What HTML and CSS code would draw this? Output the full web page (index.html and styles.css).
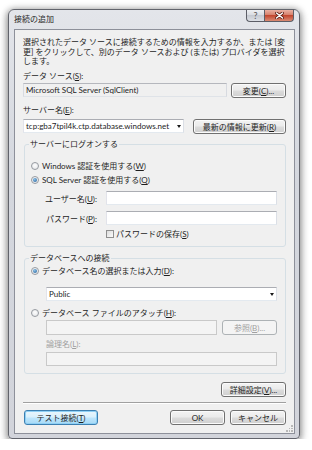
FILE: index.html
```html
<!DOCTYPE html>
<html lang="ja">
<head>
<meta charset="utf-8">
<title>接続の追加</title>
<link rel="stylesheet" href="styles.css">
</head>
<body>
<div class="win">
  <div class="titlebar">
    <span class="title">接続の追加</span>
    <div class="caps">
      <span class="cb help">?</span>
      <span class="cb close"><svg width="9" height="7" viewBox="0 0 9 7"><path d="M1.5 1 L7.5 6 M7.5 1 L1.5 6" stroke="#5a1a10" stroke-width="3" stroke-linecap="round"/><path d="M1.5 1 L7.5 6 M7.5 1 L1.5 6" stroke="#fff" stroke-width="1.6" stroke-linecap="round"/></svg></span>
    </div>
  </div>
  <div class="client">
    <div class="desc">
      <span class="ln">選択されたデータ ソースに接続するための情報を入力するか、または [変</span>
      <span class="ln">更] をクリックして、別のデータ ソースおよび (または) プロバイダを選択</span>
      <span class="ln">します。</span>
    </div>
    <div class="lbl l1">データ ソース(<u>S</u>):</div>
    <div class="row r1">
      <div class="box ro">Microsoft SQL Server (SqlClient)</div>
      <div class="btn w55">変更(<u>C</u>)...</div>
    </div>
    <div class="lbl l2">サーバー名(<u>E</u>):</div>
    <div class="row r2">
      <div class="box combo">tcp:gba7tpil4k.ctp.database.windows.net<span class="arrow"></span></div>
      <div class="btn w93">最新の情報に更新(<u>R</u>)</div>
    </div>
    <fieldset class="grp g1">
      <legend>サーバーにログオンする</legend>
      <div class="opt o1"><span class="radio"></span>Windows 認証を使用する(<u>W</u>)</div>
      <div class="opt o2"><span class="radio on"></span>SQL Server 認証を使用する(<u>Q</u>)</div>
      <div class="frm f1"><span class="flbl">ユーザー名(<u>U</u>):</span><div class="box"></div></div>
      <div class="frm f2"><span class="flbl">パスワード(<u>P</u>):</span><div class="box"></div></div>
      <div class="chk"><span class="cbox"></span>パスワードの保存(<u>S</u>)</div>
    </fieldset>
    <fieldset class="grp g2">
      <legend>データベースへの接続</legend>
      <div class="opt o3"><span class="radio on"></span>データベース名の選択または入力(<u>D</u>):</div>
      <div class="box combo db">Public<span class="arrow"></span></div>
      <div class="opt o4"><span class="radio"></span>データベース ファイルのアタッチ(<u>H</u>):</div>
      <div class="row file">
        <div class="box dis"></div>
        <div class="btn w55 disb">参照(<u>B</u>)...</div>
      </div>
      <div class="lbl dlbl">論理名(<u>L</u>):</div>
      <div class="box dis wide"></div>
    </fieldset>
    <div class="btn adv">詳細設定(<u>V</u>)...</div>
    <div class="sep"></div>
    <div class="bottom">
      <div class="btn test">テスト接続(<u>T</u>)</div>
      <div class="btn ok">OK</div>
      <div class="btn cancel">キャンセル</div>
    </div>
    <div class="grip"><i></i><i></i><i></i><i></i><i></i><i></i></div>
  </div>
</div>
</body>
</html>
```
FILE: styles.css
```css
* { box-sizing: border-box; }
html, body { margin: 0; padding: 0; background: #fff; }
body {
  font-family: Lato, "Noto Sans CJK JP", sans-serif;
  font-size: 8px;
  color: #1e1e1e;
}
u { text-decoration: underline; text-underline-offset: 1px; }

.win {
  margin: 9px 0 0 8px;
  width: 292px;
  height: 430px;
  border: 1px solid #62646c;
  border-radius: 6px 6px 4px 4px;
  background: linear-gradient(#e3e5ea, #d4d7de 40%, #d2d4db);
  padding: 0 4px 4px 5px;
  display: flex;
  flex-direction: column;
  box-shadow: 0 1px 7px 1px rgba(0,0,0,.38), 0 4px 10px rgba(0,0,0,.2);
}
.titlebar { height: 20px; display: flex; align-items: flex-start; }
.title { padding-top: 4px; line-height: 10px; color: #2a2a2a; }
.caps { margin-left: auto; margin-right: 1px; display: flex; }
.cb {
  height: 12px;
  border: 1px solid #5c5e67;
  border-top: none;
  display: flex;
  align-items: center;
  justify-content: center;
}
.help {
  width: 18px;
  border-right: none;
  border-radius: 0 0 0 4px;
  background: linear-gradient(#eef0f3, #d9dce2 45%, #c6cad2 50%, #dde0e6);
  color: #555;
  font-size: 9px;
  line-height: 10px;
}
.close {
  width: 30px;
  border-radius: 0 0 4px 0;
  background: linear-gradient(#eab0a2, #d6806b 45%, #c3472f 50%, #da8b74);
}

.client {
  flex: 1;
  border: 1px solid #8d909a;
  background: #f0f0f0;
  padding: 8px 8px 0 8px;
  display: flex;
  flex-direction: column;
}
.desc .ln { display: block; line-height: 9.5px; white-space: nowrap; }
.lbl { line-height: 10px; height: 10px; white-space: nowrap; }
.l1 { margin-top: 4.5px; }
.l2 { margin-top: 7px; }
.row { display: flex; }
.r1 { margin-top: 2px; gap: 4px; }
.r2 { margin-top: 4px; gap: 9px; }
.r1 .box { flex: 1; height: 14px; }
.r2 .box { width: 161px; height: 14px; }

.box {
  height: 14px;
  border: 1px solid;
  border-color: #abadb3 #dbdfe6 #e3e9ef #e2e3ea;
  background: #fff;
  display: flex;
  align-items: center;
  padding-left: 2px;
  white-space: nowrap;
}
.box.ro { background: #f0f0f0; border-color: #b5b7bd #d7dae0 #dfe3e8 #d7dae0; }
.box.dis { background: #f4f4f4; border-color: #c9c9c9; }
.arrow {
  margin-left: auto;
  margin-right: 2px;
  width: 0; height: 0;
  border-left: 2.5px solid transparent;
  border-right: 2.5px solid transparent;
  border-top: 3px solid #1a1a1a;
}

.btn {
  height: 15px;
  border: 1px solid #707070;
  border-radius: 3px;
  background: linear-gradient(#f3f3f3 0%, #ebebeb 48%, #dcdcdc 52%, #cfcfcf 100%);
  box-shadow: inset 0 0 0 1px #fbfbfb;
  display: flex;
  align-items: center;
  justify-content: center;
  white-space: nowrap;
  color: #1e1e1e;
}
.w55 { width: 55px; }
.w93 { width: 93px; }
.disb { color: #a0a0a0; border-color: #adb2b5; background: #f4f4f4; box-shadow: none; }

.grp {
  margin: 0 0 0 1px;
  border: 1px solid #d5dfe5;
  border-radius: 3px;
  padding: 0 8px 7px 6px;
  min-width: 0;
}
.grp legend { padding: 0 1px; margin-left: -2px; line-height: 10px; height: 10px; }
.g1 { margin-top: 5px; padding-top: 12px; }
.g2 { margin-top: 6px; padding-top: 3px; }

.opt { display: flex; align-items: center; line-height: 10px; height: 10px; white-space: nowrap; }
.o2 { margin-top: 4px; }
.o4 { margin-top: 7px; }
.radio {
  width: 8px; height: 8px;
  border-radius: 50%;
  border: 1px solid #979ba1;
  background: radial-gradient(circle at 50% 40%, #fdfdfd, #e2e4e7);
  margin-right: 3px;
  display: flex; align-items: center; justify-content: center;
}
.radio.on::after {
  content: "";
  width: 4px; height: 4px; border-radius: 50%;
  background: radial-gradient(circle at 40% 35%, #8cc0e8, #1d5b94);
}

.frm { display: grid; grid-template-columns: 66px 171px; column-gap: 9px; align-items: center; }
.f1 { margin-top: 6px; }
.f2 { margin-top: 6px; }
.flbl { text-align: right; white-space: nowrap; }
.chk { margin-top: 4px; padding-left: 75px; display: flex; align-items: center; line-height: 10px; height: 10px; white-space: nowrap; }
.cbox {
  width: 8px; height: 8px;
  border: 1px solid #8f8f8f;
  background: linear-gradient(135deg, #dcdcdc, #fbfbfb);
  margin-right: 2px;
}

.g2 .db { margin: 11px 0 0 15px; }
.file { margin: 2px 0 0 15px; gap: 5px; }
.file .box { width: 171px; height: 15px; }
.file .btn { height: 15px; }
.dlbl { margin: 4px 0 0 15px; color: #a0a0a0; }
.wide { margin: 3px 0 0 15px; }

.adv { width: 65px; align-self: flex-end; margin-top: 8px; }
.sep { margin-top: 5px; border-top: 1px solid #a0a0a0; border-bottom: 1px solid #fff; }
.bottom { margin-top: 6px; display: flex; gap: 5px; }
.test {
  width: 74px; margin-left: 1px;
  border-color: #3c7fb1;
  box-shadow: inset 0 0 0 1px #8fd0f5;
  background: linear-gradient(#eaf6fd 0%, #d9f0fc 48%, #bee6fd 52%, #a7d9f5 100%);
}
.ok { width: 55px; margin-left: auto; }
.cancel { width: 56px; }
.grip {
  margin-top: auto;
  align-self: flex-end;
  margin-right: -7px;
  margin-bottom: 1px;
  width: 7px; height: 7px;
  display: grid;
  grid-template-columns: repeat(3, 2px);
  grid-template-rows: repeat(3, 2px);
  gap: 0.5px;
}
.grip i { width: 1.5px; height: 1.5px; background: #b8b8b8; }
.grip i:nth-child(1) { grid-column: 3; grid-row: 1; }
.grip i:nth-child(2) { grid-column: 2; grid-row: 2; }
.grip i:nth-child(3) { grid-column: 3; grid-row: 2; }
.grip i:nth-child(4) { grid-column: 1; grid-row: 3; }
.grip i:nth-child(5) { grid-column: 2; grid-row: 3; }
.grip i:nth-child(6) { grid-column: 3; grid-row: 3; }
```
